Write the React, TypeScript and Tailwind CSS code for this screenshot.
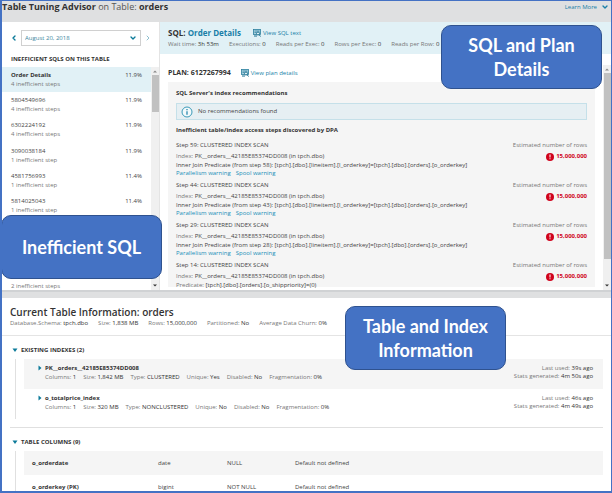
import type { ReactNode } from "react";
import { ChevronDown, ChevronLeft, ChevronRight } from "lucide-react";

type Pair = [label: string, value: string];

const inefficientSqls = [
  { name: "Order Details", steps: "4 inefficient steps", share: "11.9%" },
  { name: "5804549696", steps: "4 inefficient steps", share: "11.9%" },
  { name: "6302224192", steps: "4 inefficient steps", share: "11.9%" },
  { name: "3090038184", steps: "1 inefficient step", share: "11.9%" },
  { name: "4581756993", steps: "1 inefficient step", share: "11.4%" },
  { name: "5814025043", steps: "1 inefficient step", share: "11.4%" },
  { name: "", steps: "", share: "" },
  { name: "", steps: "", share: "" },
  { name: "2281111123", steps: "2 inefficient steps", share: "11.4%" },
];

const joinPredicate = "[tpch].[dbo].[lineitem].[l_orderkey]=[tpch].[dbo].[orders].[o_orderkey]";

const steps = [
  { id: 59, label: "Inner Join Predicate (from step 58):", predicate: joinPredicate, warnings: true },
  { id: 44, label: "Inner Join Predicate (from step 43):", predicate: joinPredicate, warnings: true },
  { id: 29, label: "Inner Join Predicate (from step 28):", predicate: joinPredicate, warnings: true },
  { id: 14, label: "Predicate:", predicate: "[tpch].[dbo].[orders].[o_shippriority]=(0)", warnings: false },
];

const indexes: { name: string; facts: Pair[]; used: string; stats: string }[] = [
  {
    name: "PK__orders__42185E85374DD008",
    facts: [["Columns:", "1"], ["Size:", "1,842 MB"], ["Type:", "CLUSTERED"], ["Unique:", "Yes"], ["Disabled:", "No"], ["Fragmentation:", "0%"]],
    used: "39s ago",
    stats: "4m 50s ago",
  },
  {
    name: "o_totalprice_index",
    facts: [["Columns:", "1"], ["Size:", "320 MB"], ["Type:", "NONCLUSTERED"], ["Unique:", "No"], ["Disabled:", "No"], ["Fragmentation:", "0%"]],
    used: "46s ago",
    stats: "4m 49s ago",
  },
];

const columns = [
  ["o_orderdate", "date", "NULL", "Default not defined"],
  ["o_orderkey (PK)", "bigint", "NOT NULL", "Default not defined"],
];

function Facts({ items, gap = "gap-[10px]" }: { items: Pair[]; gap?: string }) {
  return (
    <p className={`flex whitespace-nowrap text-[6px] leading-[8px] text-[#777] ${gap}`}>
      {items.map(([label, value]) => (
        <span key={label}>
          {label} <span className="text-[#333]">{value}</span>
        </span>
      ))}
    </p>
  );
}

function ViewIcon() {
  return (
    <svg viewBox="0 0 16 16" className="size-2 shrink-0" aria-hidden="true">
      <rect x="1" y="1" width="14" height="10" fill="#a9d0de" stroke="#2b7f9e" strokeWidth="1.6" />
      <path d="M3 4h10M3 7h4" stroke="#2b7f9e" strokeWidth="1.4" />
      <circle cx="10" cy="9" r="3" fill="#e1f1f6" stroke="#1b6f8f" strokeWidth="1.8" />
      <path d="M12 11l3 4M2 14h6" stroke="#1b6f8f" strokeWidth="2" />
    </svg>
  );
}

function ScrollBar({ thumb }: { thumb: string }) {
  return (
    <div className="flex w-2 shrink-0 flex-col items-center bg-[#f0f0f0]" aria-hidden="true">
      <svg viewBox="0 0 8 8" className="size-2 shrink-0">
        <path d="M2 5.500L4 3.500L6 5.500z" fill="#888" />
      </svg>
      <div className={`w-[7px] bg-[#c1c1c1] ${thumb}`} />
      <svg viewBox="0 0 8 8" className="mt-auto size-2 shrink-0">
        <path d="M2 2.500L4 4.500L6 2.500z" fill="#333" />
      </svg>
    </div>
  );
}

function Triangle({ open }: { open: boolean }) {
  return (
    <svg viewBox="0 0 6 6" className="size-[6px] shrink-0" aria-hidden="true">
      <path d={open ? "M0.500 1.500h5L3 5z" : "M1.500 0.500v5L4.500 3z"} fill="#0b7a99" />
    </svg>
  );
}

function Callout({ place, children }: { place: string; children: ReactNode }) {
  return (
    <div
      className={`absolute flex h-16 w-[161px] items-center justify-center rounded-[10px] border border-[#2f528f] bg-[#4472c4] text-center font-['Lato',sans-serif] text-[18px] leading-6 font-bold text-white ${place}`}
    >
      <span>{children}</span>
    </div>
  );
}

function SqlList() {
  return (
    <aside className="flex w-[158px] shrink-0 flex-col border-r border-[#e4e4e4]">
      <div className="mt-2 flex h-4 items-center gap-[3px] pr-[7px] pl-2">
        <button type="button" aria-label="Previous day">
          <ChevronLeft className="size-2 text-[#0b7a99]" strokeWidth={4} />
        </button>
        <div className="relative flex-1">
          <select
            aria-label="Day"
            className="block h-4 w-full appearance-none border border-[#d0d0d0] bg-white pl-[3px] text-[6px] leading-[14px] text-[#3c87a0]"
          >
            <option>August 20, 2018</option>
          </select>
          <ChevronDown className="pointer-events-none absolute top-1 right-1 size-2 text-[#0b7a99]" strokeWidth={4} />
        </div>
        <button type="button" aria-label="Next day">
          <ChevronRight className="size-2 text-[#8fc0d0]" strokeWidth={3} />
        </button>
      </div>
      <h2 className="mt-[7px] pl-[9px] text-[6px] leading-[12px] font-bold">INEFFICIENT SQLS ON THIS TABLE</h2>
      <div className="mt-[2px] flex min-h-0 flex-1">
        <div className="min-w-0 flex-1 overflow-hidden">
          <ul className="grid h-[227px] auto-rows-fr">
            {inefficientSqls.map((sql, i) => (
              <li key={i} className={i === 0 ? "bg-[#e1f1f6]" : "bg-white"}>
                <button type="button" className="block w-full px-[9px] pt-[3px] text-left text-[6px]">
                  <span className="flex justify-between leading-[11px]">
                    <span className={i === 0 ? "font-bold" : "text-[#444]"}>{sql.name}</span>
                    <span className="text-[#444]">{sql.share}</span>
                  </span>
                  <span className="block leading-[7px] text-[#777]">{sql.steps}</span>
                </button>
              </li>
            ))}
          </ul>
        </div>
        <ScrollBar thumb="h-[37px]" />
      </div>
    </aside>
  );
}

function PlanDetails() {
  return (
    <section className="flex min-w-0 flex-1 flex-col">
      <header className="h-8 shrink-0 overflow-hidden bg-[#e1f1f6] pt-1 pl-2">
        <div className="flex items-center gap-3">
          <h2 className="text-[8px] leading-[14px] font-bold">
            SQL: <span className="text-[#1a7fa8]">Order Details</span>
          </h2>
          <a href="#sql" className="flex items-center gap-[2px] text-[6px] leading-[14px] text-[#1a7fa8]">
            <ViewIcon /> View SQL text
          </a>
        </div>
        <Facts
          items={[["Wait time:", "3h 53m"], ["Executions:", "0"], ["Reads per Exec:", "0"], ["Rows per Exec:", "0"], ["Reads per Row:", "0"]]}
        />
      </header>
      <div className="flex min-h-0 flex-1 pt-[11px]">
        <div className="min-w-0 flex-1 overflow-hidden pr-2 pb-[3px] pl-2">
          <div className="flex items-center gap-[10px]">
            <h3 className="text-[7px] leading-[16px] font-bold">PLAN: 6127267994</h3>
            <a href="#plan" className="flex items-center gap-[2px] text-[6px] leading-[16px] text-[#1a7fa8]">
              <ViewIcon /> View plan details
            </a>
          </div>
          <div className="mt-px h-[205px] bg-[#f5f5f5] px-2 pt-[5px]">
            <h4 className="text-[6px] leading-[13px] font-bold">SQL Server's index recommendations</h4>
            <div className="mt-[3px] flex h-[17px] items-center gap-[5px] border border-[#c5e0e9] bg-[#e6eff3] pl-1 text-[6px] text-[#444]">
              <svg viewBox="0 0 12 12" className="size-3" aria-hidden="true">
                <circle cx="6" cy="6" r="5" fill="#f3f9fb" stroke="#3a9ab8" />
                <path d="M6 5.200v3.500M6 3v1.200" stroke="#1a7fa8" strokeWidth="1.2" />
              </svg>
              No recommendations found
            </div>
            <h4 className="mt-1 text-[6px] leading-[13px] font-bold">
              Inefficient table/index access steps discovered by DPA
            </h4>
            <ol className="mt-[2px] flex flex-col gap-[2px]">
              {steps.map((step) => (
                <li key={step.id} className="flex justify-between text-[6px] text-[#444]">
                  <div className="whitespace-nowrap">
                    <p className="leading-[13px]">Step {step.id}: CLUSTERED INDEX SCAN</p>
                    <p className="leading-[9px]">
                      <span className="text-[#777]">Index:</span> PK__orders__42185E85374DD008 (in tpch.dbo)
                    </p>
                    <p className="leading-[9px]">
                      <span className={step.warnings ? "text-[#444]" : "text-[#777]"}>{step.label}</span> {step.predicate}
                    </p>
                    {step.warnings && (
                      <p className="flex gap-[5px] leading-[7px] text-[#1a8fb8]">
                        <a href="#parallelism">Parallelism warning</a>
                        <a href="#spool">Spool warning</a>
                      </p>
                    )}
                  </div>
                  <div className="text-right whitespace-nowrap">
                    <p className="leading-[13px] text-[#777]">Estimated number of rows</p>
                    <p className="flex items-center justify-end gap-[2px] leading-[9px] font-bold text-[#d0021b]">
                      <svg viewBox="0 0 10 10" className="size-2" aria-hidden="true">
                        <circle cx="5" cy="5" r="5" fill="#d0021b" />
                        <path d="M5 2v3.500M5 6.500v1.300" stroke="#fff" strokeWidth="1.3" />
                      </svg>
                      15,000,000
                    </p>
                  </div>
                </li>
              ))}
            </ol>
          </div>
        </div>
        <ScrollBar thumb="h-[186px]" />
      </div>
    </section>
  );
}

function TableInformation() {
  return (
    <section className="min-h-0 flex-1 overflow-hidden">
      <header className="border-b border-[#e4e4e4] px-2 pt-2 pb-2">
        <h2 className="text-[10px] leading-[13px] font-semibold">Current Table Information: orders</h2>
        <Facts
          items={[["Database.Schema:", "tpch.dbo"], ["Size:", "1,838 MB"], ["Rows:", "15,000,000"], ["Partitioned:", "No"], ["Average Data Churn:", "0%"]]}
        />
      </header>
      <div className="px-2">
        <button type="button" className="mt-2 flex items-center gap-[3px] pl-[2px] text-[6px] leading-[12px] font-bold">
          <Triangle open /> EXISTING INDEXES (2)
        </button>
        <ul className="mt-[3px] ml-[5px] border-l border-[#e0e0e0] pl-2">
          {indexes.map((index, i) => (
            <li
              key={index.name}
              className={`flex h-[30px] justify-between pt-1 pr-[10px] pl-[13px] ${i === 0 ? "bg-[#f5f5f5]" : "bg-white"}`}
            >
              <div>
                <button type="button" className="flex items-center gap-[2px] text-[6px] leading-[10px] font-bold">
                  <Triangle open={false} /> {index.name}
                </button>
                <div className="pl-2">
                  <Facts items={index.facts} gap="gap-[7px]" />
                </div>
              </div>
              <div className="text-right text-[6px] leading-[8px] text-[#777]">
                <p className="pt-px">
                  Last used: <span className="text-[#333]">{index.used}</span>
                </p>
                <p>
                  Stats generated: <span className="text-[#333]">{index.stats}</span>
                </p>
              </div>
            </li>
          ))}
        </ul>
        <div className="mt-2 border-t border-[#e0e0e0]" />
        <button type="button" className="mt-2 flex items-center gap-[3px] pl-[2px] text-[6px] leading-[12px] font-bold">
          <Triangle open /> TABLE COLUMNS (9)
        </button>
        <div className="mt-[3px] ml-[5px] border-l border-[#e0e0e0] pl-2">
          <table className="w-full table-fixed text-left text-[6px] text-[#444]">
            <tbody>
              {columns.map(([name, type, nullable, fallback], i) => (
                <tr key={name} className={`h-6 ${i === 0 ? "bg-[#f5f5f5]" : "bg-white"}`}>
                  <th scope="row" className="w-[134px] pl-2 font-bold text-[#333]">{name}</th>
                  <td className="w-[69px]">{type}</td>
                  <td className="w-[68px]">{nullable}</td>
                  <td>{fallback}</td>
                </tr>
              ))}
            </tbody>
          </table>
        </div>
      </div>
    </section>
  );
}

export default function App() {
  return (
    <main className="relative flex h-screen w-full flex-col overflow-hidden border border-b-2 border-l-2 border-[#4472c4] bg-white font-['Open_Sans',sans-serif] text-[#333]">
      <header className="flex h-[21px] shrink-0 items-start justify-between bg-[#dfe0e1] pr-[2px]">
        <h1 className="text-[9px] leading-[12px] font-bold">
          Table Tuning Advisor <span className="font-normal text-[#555]">on Table:</span> orders
        </h1>
        <button type="button" className="flex items-center gap-1 text-[6px] leading-[12px] text-[#1a7fa8]">
          Learn More <ChevronDown className="size-2" strokeWidth={4} />
        </button>
      </header>
      <div className="flex h-[268px] shrink-0">
        <SqlList />
        <PlanDetails />
      </div>
      <div className="h-2 shrink-0 border-t-2 border-[#d0d2d4] bg-[#dfe0e1]" />
      <TableInformation />
      <Callout place="top-[214px] -left-px">Inefficient SQL</Callout>
      <Callout place="top-6 right-[9px]">
        SQL and Plan
        <br />
        Details
      </Callout>
      <Callout place="top-[305px] left-[343px]">
        Table and Index
        <br />
        Information
      </Callout>
    </main>
  );
}
